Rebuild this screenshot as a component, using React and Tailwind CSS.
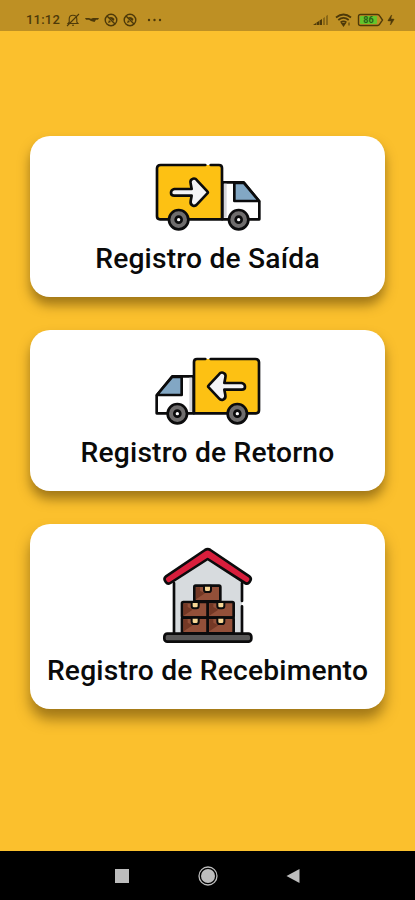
import { Zap } from 'lucide-react';

const TruckIcon = ({ flipped = false }) => (
    <svg width="108" height="70" viewBox="42 36 324 210" className={flipped ? '-scale-x-100' : ''} fill="none" stroke="#0b0b0c" strokeWidth="8" strokeLinecap="round" strokeLinejoin="round">
        {/* Cab */}
        <path d="M247 97h64l47 57v54H247z" fill="#fff" />
        <path d="M252 101h8v102h-8z" fill="#d5d5da" stroke="none" />
        <path d="M283 99v54h74l-46-55z" fill="#82a7c4" />
        {/* Cargo box */}
        <path d="M62 45h175q9 0 9 9v154H60q-9 0-9-9V55q0-10 11-10z" fill="#fdc113" stroke="none" />
        <path d="M196 45H62q-11 0-11 10v144q0 9 9 9h186V54q0-9-9-9h-25" />
        {/* Arrow */}
        <path d="M103 117h52l-3-16q-3-12 7-15 7-2 12 5l31 33q3 3 0 6l-31 33q-5 6-12 4-9-3-7-14l3-16h-52q-10 0-10-9t10-11z" fill="#f3f3f6" />
        {/* Wheels */}
        {[116, 296].map(cx => (
            <g key={cx}>
                <circle cx={cx} cy="209" r="29" fill="#6f6d6d" />
                <circle cx={cx} cy="209" r="9" fill="#fff" />
            </g>
        ))}
    </svg>
);

const crates = [
    { x: 134, y: 138 },
    { x: 97, y: 187 },
    { x: 174, y: 187 },
    { x: 97, y: 234 },
    { x: 174, y: 234 },
];

const WarehouseIcon = () => (
    <svg width="90" height="97" viewBox="40 22 270 291" fill="none" stroke="#0b0b0c" strokeWidth="8" strokeLinecap="round" strokeLinejoin="round">
        <path d="M73 118L174 56l103 62v164H73z" fill="#d7dbde" stroke="none" />
        <path d="M73 130v152M277 130v54M277 200v82" />
        {/* Roof */}
        <path d="M166 31q8-5 16 0l117 79q7 5 3 13l-3 5q-5 7-13 2L174 58 62 130q-8 5-13-2l-3-5q-4-8 3-13z" fill="#d81e3c" />
        {/* Crates */}
        {crates.map(({ x, y }) => (
            <g key={`${x}-${y}`}>
                <rect x={x} y={y} width="78" height="47" rx="4" fill="#935039" />
                <path d={`M${x + 5} ${y + 41}V${y + 5}h12v10l15 8z`} fill="#743825" stroke="none" />
                <path d={`M${x + 29} ${y}v12q0 7 7 7h7q7 0 7-7V${y}z`} fill="#f7d795" strokeWidth="6" />
            </g>
        ))}
        {/* Floor */}
        <rect x="44" y="282" width="261" height="24" rx="9" fill="#595858" />
    </svg>
);

const MenuCard = ({ icon, label, className = 'pt-[26px] shadow-[0_8px_12px_rgba(70,45,0,0.5)]' }) => (
    <button className={`flex w-full flex-col items-center rounded-[20px] bg-white pb-5 ${className}`}>
        {icon}
        <span className="mt-[9px] text-[28.2px] leading-9 font-medium tracking-[0.2px] whitespace-nowrap text-[#0a0a0a]">{label}</span>
    </button>
);

const NoBirdIcon = () => (
    <svg width="14" height="14" viewBox="0 0 14 14" fill="none" stroke="currentColor" strokeWidth="1.4">
        <circle cx="7" cy="7" r="5.8" />
        <path d="M3 3l8 8" strokeWidth="1.5" />
        <path d="M5 4.5Q8 3 10.5 6L9.5 8zM4 10l1-3 2 2z" fill="currentColor" stroke="none" />
    </svg>
);

const StatusBar = () => (
    <div className="flex h-[31px] items-start justify-between bg-[#be9024] pt-3 pr-5 pl-[26px] text-[#4d3909]">
        <div className="flex h-[15px] items-center">
            <span className="w-[34px] text-[13px] leading-[15px] font-medium tracking-[0.2px]">11:12</span>
            <svg className="ml-[6px]" width="14" height="14" viewBox="0 0 14 14" fill="none" stroke="currentColor" strokeWidth="1.1">
                <path d="M2 10.5h10L10.8 9V6Q10.8 2.2 7 2.2T3.2 6v3zM6 12.3h2M1 13L13 1" />
            </svg>
            <svg className="ml-[5px]" width="14" height="14" viewBox="0 0 14 14" fill="currentColor">
                <path d="M0 5h4l2 .7 2-.7h6l-1 1.7h-2L9.5 9 6 8 4 6.7H1z" />
            </svg>
            <span className="ml-[5px] flex gap-[5px]">
                <NoBirdIcon />
                <NoBirdIcon />
            </span>
            <svg className="ml-[10px]" width="15" height="14" viewBox="0 0 15 14" fill="currentColor">
                <circle cx="2" cy="7" r="1.2" />
                <circle cx="7.5" cy="7" r="1.2" />
                <circle cx="13" cy="7" r="1.2" />
            </svg>
        </div>
        <div className="flex h-[15px] items-center">
            <svg width="16" height="13" viewBox="0 0 16 13" fill="currentColor">
                <path d="M0 12l3-2v2zM3.5 9.5L6 8v4H3.5zM6.5 7.5L9 6v6H6.5z" />
                <path d="M10 5.2l2-1.3V12h-2zM13 3l2-1.3V12h-2z" opacity=".45" />
            </svg>
            <svg className="ml-[6px]" width="17" height="14" viewBox="0 0 17 14" fill="none" stroke="currentColor" strokeWidth="1.8">
                <path d="M1 4.5Q8.5-1.5 16 4.5M3.3 7Q8.5 2.8 13.7 7M5.6 9.5q2.9-2.3 5.8 0" />
                <path d="M7.5 11h2l-1 1.4z" />
                <path d="M14 9.5v3" strokeWidth="1" />
            </svg>
            <svg className="ml-[5px]" width="27" height="14" viewBox="0 0 27 14">
                <path d="M3.5 1.5h17q1.5 0 2.2 1.3L25.5 7l-2.8 4.2q-.7 1.3-2.2 1.3h-17q-2 0-2-2v-7q0-2 2-2z" fill="none" stroke="currentColor" strokeWidth="1.4" />
                <rect x="3" y="3" width="17" height="8" rx="1" fill="#64c52b" />
                <text x="11.5" y="10.2" textAnchor="middle" fontSize="9" fontWeight="700" fill="#286019">86</text>
            </svg>
            <Zap className="ml-[3px]" size={8} height={12} preserveAspectRatio="none" fill="currentColor" strokeWidth={1} />
        </div>
    </div>
);

const NavigationBar = () => (
    <div className="flex h-[49px] items-center justify-between bg-black pr-[115px] pl-[115px] text-[#bdbdbd]">
        <span className="size-[14px] bg-current" />
        <svg width="20" height="20" viewBox="0 0 20 20" fill="currentColor">
            <circle cx="10" cy="10" r="9" fill="none" stroke="currentColor" strokeWidth="1.3" />
            <circle cx="10" cy="10" r="7" />
        </svg>
        <svg width="14" height="14" viewBox="0 0 14 14" fill="currentColor">
            <path d="M13.5 0v14L.5 7z" />
        </svg>
    </div>
);

const App = () => (
    <div className="flex h-[900px] w-[415px] flex-col overflow-hidden bg-[#fbc02d] font-['Roboto',sans-serif]">
        <StatusBar />
        <main className="flex flex-1 flex-col gap-[33px] pt-[105px] pr-[30px] pl-[30px]">
            <MenuCard icon={<TruckIcon />} label="Registro de Saída" />
            <MenuCard icon={<TruckIcon flipped />} label="Registro de Retorno" />
            <MenuCard icon={<WarehouseIcon />} label="Registro de Recebimento" className="pt-[23px] shadow-[0_10px_14px_rgba(70,45,0,0.5)]" />
        </main>
        <NavigationBar />
    </div>
);

export default App;
